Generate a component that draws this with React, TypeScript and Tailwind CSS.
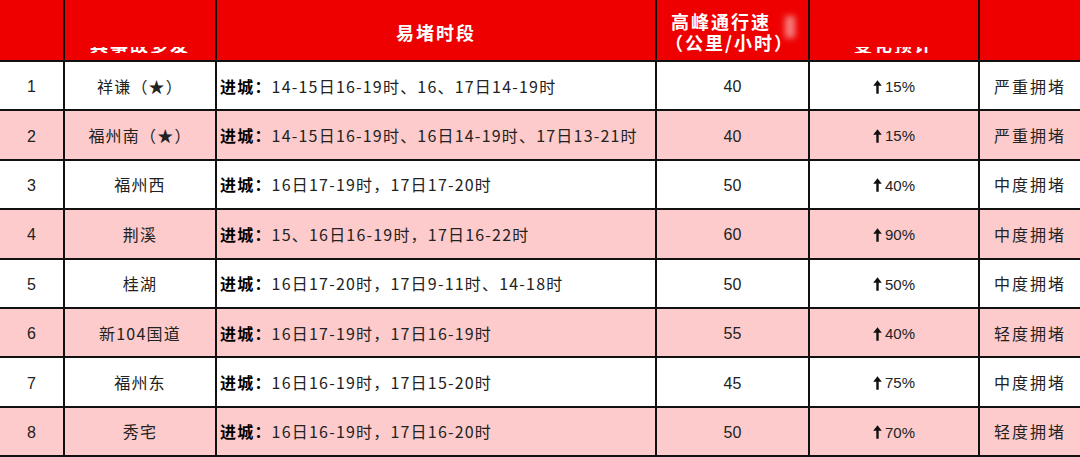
import React from "react";

type Row = {
  no: number;
  name: string;
  time: string;
  speed: number;
  change: string;
  level: string;
};

const rows: Row[] = [
  { no: 1, name: "祥谦（★）", time: "14-15日16-19时、16、17日14-19时", speed: 40, change: "15%", level: "严重拥堵" },
  { no: 2, name: "福州南（★）", time: "14-15日16-19时、16日14-19时、17日13-21时", speed: 40, change: "15%", level: "严重拥堵" },
  { no: 3, name: "福州西", time: "16日17-19时，17日17-20时", speed: 50, change: "40%", level: "中度拥堵" },
  { no: 4, name: "荆溪", time: "15、16日16-19时，17日16-22时", speed: 60, change: "90%", level: "中度拥堵" },
  { no: 5, name: "桂湖", time: "16日17-20时，17日9-11时、14-18时", speed: 50, change: "50%", level: "中度拥堵" },
  { no: 6, name: "新104国道", time: "16日17-19时，17日16-19时", speed: 55, change: "40%", level: "轻度拥堵" },
  { no: 7, name: "福州东", time: "16日16-19时，17日15-20时", speed: 45, change: "75%", level: "中度拥堵" },
  { no: 8, name: "秀宅", time: "16日16-19时，17日16-20时", speed: 50, change: "70%", level: "轻度拥堵" },
];

const cjk = "font-['Noto_Sans_CJK_SC','Noto_Sans',sans-serif]";
const latin = "font-['Liberation_Sans',Arial,sans-serif]";

function UpArrow() {
  return (
    <svg width="9" height="14" viewBox="0 0 9 14" className="inline-block mr-[3px] -mt-[1px]">
      <path d="M4.5 0.3 L8.8 5.8 L5.7 5.8 L5.7 13.7 L3.3 13.7 L3.3 5.8 L0.2 5.8 Z" fill="#111" />
    </svg>
  );
}

// header label that only shows its lower slice (as in the shot)
function ClippedLabel({ text }: { text: string }) {
  return (
    <div className="h-full flex flex-col justify-end items-center pb-[7px]">
      <div className="h-[6px] overflow-hidden">
        <div className={`${cjk} text-[18px] leading-[18px] font-bold text-white tracking-[2px] -mt-[12px]`}>{text}</div>
      </div>
    </div>
  );
}

export default function App() {
  const cell = "border-r-2 border-b-2 border-[#111]";
  return (
    <div className="w-[1080px] h-[457px] overflow-hidden bg-white">
      <div className="grid grid-cols-[65px_152px_440px_153px_170px_100px]">
        {/* header */}
        <div className={`h-[62px] bg-[#ee0000] ${cell}`} />
        <div className={`h-[62px] bg-[#ee0000] ${cell}`}>
          <ClippedLabel text="具事故多发" />
        </div>
        <div className={`h-[62px] bg-[#ee0000] ${cell} flex items-center justify-center`}>
          <span className={`${cjk} text-[18px] font-bold text-white tracking-[2px] mt-[4px]`}>易堵时段</span>
        </div>
        <div className={`h-[62px] bg-[#ee0000] ${cell} relative overflow-hidden`}>
          <div className={`${cjk} text-[18px] leading-[21px] font-bold text-white tracking-[2px] pl-[14px] pt-[11px] w-[142px] overflow-hidden whitespace-nowrap`}>
            <div>高峰通行速</div>
            <div className="-ml-[6px]">（公里/小时）</div>
          </div>
          <div className="absolute left-[128px] top-[16px] w-[10px] h-[22px] bg-white/50 blur-[3px]" />
        </div>
        <div className={`h-[62px] bg-[#ee0000] ${cell}`}>
          <ClippedLabel text="变化预计" />
        </div>
        <div className="h-[62px] bg-[#ee0000] border-b-2 border-[#111]" />

        {rows.map((r) => {
          const bg = r.no % 2 === 0 ? "bg-[#fdcbcb]" : "bg-white";
          return (
            <React.Fragment key={r.no}>
              <div className={`h-[49.4px] ${bg} ${cell} flex items-center justify-center ${latin} text-[16px] text-[#222] pt-[3px]`}>{r.no}</div>
              <div className={`h-[49.4px] ${bg} ${cell} flex items-center justify-center ${cjk} text-[16px] text-[#222] tracking-[1.2px]`}>{r.name}</div>
              <div className={`h-[49.4px] ${bg} ${cell} flex items-center pl-[3px] ${cjk} text-[16px] text-[#222] tracking-[1.2px] whitespace-nowrap`}>
                <span className="font-bold text-black">进城：</span>
                <span>{r.time}</span>
              </div>
              <div className={`h-[49.4px] ${bg} ${cell} flex items-center justify-center ${latin} text-[16px] text-[#222] pt-[3px]`}>{r.speed}</div>
              <div className={`h-[49.4px] ${bg} ${cell} flex items-center justify-center ${latin} text-[15px] text-[#222] pt-[3px]`}>
                <UpArrow />
                {r.change}
              </div>
              <div className={`h-[49.4px] ${bg} border-b-2 border-[#111] flex items-center justify-center ${cjk} text-[16px] text-[#222] tracking-[2px]`}>{r.level}</div>
            </React.Fragment>
          );
        })}
      </div>
    </div>
  );
}
